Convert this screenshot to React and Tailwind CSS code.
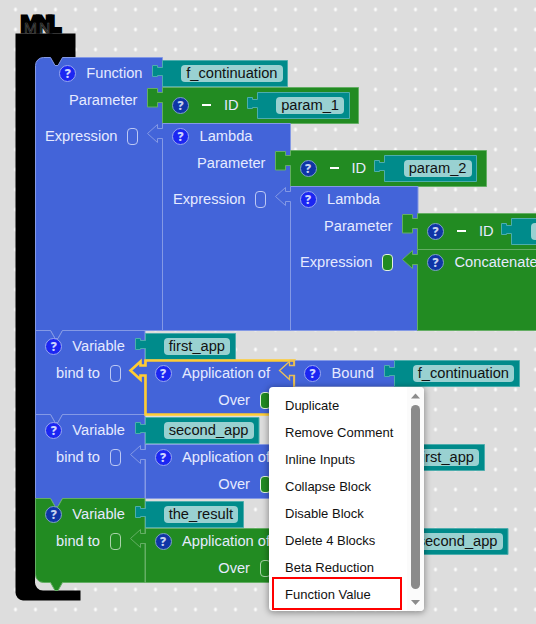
import React from "react";

const BLUE = "#4364d9";
const GREEN = "#228b22";
const TEAL = "#008b8b";
const EDGE = {
  [BLUE]: "#8499e5",
  [GREEN]: "#64ae64",
  [TEAL]: "#4dadad",
};

// Connector outlines, walked upward along a block's left edge from the bottom.
const TABS = {
  none: "",
  text: "V15 H-5 V16 H-10 V5 H-5 V7 H0",
  param: "V15 H-5 V19.5 H-15 V1 H-5 V5 H0",
  arrow: "V15 H-5 V19 L-15 10 L-5 1 V5 H0",
};

// A node of the workspace: its outline, and its inputs as rows.
function Node({ x, y, w, d, fill, stroke = EDGE[fill], sw = 1, children }) {
  return (
    <div className="absolute flex flex-col" style={{ left: x, top: y, width: w }}>
      <svg className="absolute top-0 left-0 overflow-visible" width="1" height="1">
        <path d={d} transform="translate(0.5 0.5)" fill={fill} stroke={stroke} strokeWidth={sw} />
      </svg>
      {children}
    </div>
  );
}

function Block({ w, h, tab = "none", ...rest }) {
  return <Node w={w} d={`M0 0 H${w} V${h} H0 ${TABS[tab]} Z`} {...rest} />;
}

function Statement({ w, h, first, last, ...rest }) {
  const top = first ? "M0 8 A8 8 0 0 1 8 0 H15" : "M0 0 H15";
  const bottom = last ? `H8 A8 8 0 0 1 0 ${h - 8}` : "H0";
  const d = `${top} L19.5 8 H22.5 L27 0 H${w} V${h} H27 L22.5 ${h + 8} H19.5 L15 ${h} ${bottom} Z`;
  return <Node x={35} w={w} d={d} {...rest} />;
}

function Row({ className, children }) {
  return (
    <div className={`relative flex items-center text-[14.67px] leading-5 whitespace-nowrap text-[#e6eaff] ${className}`}>
      {children}
    </div>
  );
}

function Help({ green }) {
  return (
    <span
      className={`relative top-[0.5px] left-[0.5px] flex size-[17px] shrink-0 items-center justify-center rounded-full border-[1.5px] font-['Open_Sans',sans-serif] text-[12px] leading-none font-extrabold ${
        green ? "border-[#7fa3c4] bg-[#0f35a6] text-[#c3d1f0]" : "border-[#98a7f0] bg-[#1b26f2] text-[#ccd3ff]"
      }`}
    >
      ?
    </span>
  );
}

const SLOTS = {
  blue: "border-[#bcc8f4]",
  filled: "border-[#e2f0e2] bg-[#228b22]",
  green: "border-[#a9d3a9]",
};

function Slot({ kind = "blue" }) {
  return <span className={`relative top-[0.5px] h-[17px] w-[11px] shrink-0 rounded-[4px] border-[1.3px] ${SLOTS[kind]}`} />;
}

function TextBlock({ x, y, w, tight, children }) {
  return (
    <Block x={x} y={y} w={w} h={26} tab="text" fill={TEAL}>
      <Row className={`h-[26px] justify-end ${tight ? "pr-[5px]" : "pr-[4.5px]"}`}>
        <span className="flex h-[17px] min-w-[66px] items-center justify-center rounded bg-[#99d1d1] px-[5px] text-[#111]">
          {children}
        </span>
      </Row>
    </Block>
  );
}

function IdBlock({ x, y }) {
  return (
    <Block x={x} y={y} w={196} h={36} tab="param" fill={GREEN}>
      <Row className="h-9 pl-[9.5px]">
        <Help green />
        <span className="mr-[13px] ml-[13.5px] h-[2px] w-[9px] bg-white" />
        ID
      </Row>
    </Block>
  );
}

function LambdaBlock({ x, y, w, h, slot }) {
  return (
    <Block x={x} y={y} w={w} h={h} tab="arrow" fill={BLUE}>
      <Row className="h-[26px] gap-[11px] pl-[9.5px]"><Help />Lambda</Row>
      <Row className="h-[28px] justify-end pr-[24.5px]">Parameter</Row>
      <Row className="h-[44px] justify-end gap-[9.5px] pr-[24px]">Expression<Slot kind={slot} /></Row>
    </Block>
  );
}

function VariableBlock({ y, fill, green, last }) {
  return (
    <Statement y={y} w={109.5} h={84} fill={fill} last={last}>
      <Row className="h-8 justify-end gap-[10.5px] pr-[19.5px]"><Help green={green} />Variable</Row>
      <Row className="h-[22px] justify-end gap-[9.5px] pr-[24px]">bind to<Slot kind={green ? "green" : "blue"} /></Row>
    </Statement>
  );
}

function ApplicationBlock({ y, fill, green, stroke, sw }) {
  return (
    <Block x={144.5} y={y} w={149} h={54} tab="arrow" fill={fill} stroke={stroke} sw={sw}>
      <Row className="h-[26px] justify-end gap-[11px] pr-[23.5px]"><Help green={green} />Application of</Row>
      <Row className="h-[28px] justify-end gap-[9.5px] pr-[23px]">Over<Slot kind={green ? "green" : "filled"} /></Row>
    </Block>
  );
}

function Backdrop() {
  return (
    <svg className="absolute inset-0" width="536" height="624">
      <defs>
        <pattern id="dots" x="5.5" y="-0.5" width="20" height="20" patternUnits="userSpaceOnUse">
          <path d="M8.5 10 H11.5 M10 8 V12" stroke="#fff" strokeWidth="1.3" />
        </pattern>
      </defs>
      <rect width="536" height="624" fill="#ddd" />
      <rect width="536" height="624" fill="url(#dots)" />
      <path d="M15.5 33.5 H75.5 V66 H35 V582 A8 8 0 0 0 43 590.5 H80.5 V600.5 H23 A8 8 0 0 1 15.5 592.5 Z" fill="#000" />
      <text
        x="21.5 36.5 48.5" y="31" fontSize="21" fontFamily="Liberation Sans, sans-serif"
        fill="#000" stroke="#000" strokeWidth="5" strokeMiterlimit="2"
      >
        MNL
      </text>
      <text
        x="24 39" y="33" fontSize="15.5" fontFamily="Liberation Sans, sans-serif"
        fill="#000" stroke="#555" strokeWidth="0.6"
      >
        MN
      </text>
    </svg>
  );
}

const menu = [
  "Duplicate", "Remove Comment", "Inline Inputs", "Collapse Block",
  "Disable Block", "Delete 4 Blocks", "Beta Reduction", "Function Value",
];

function ContextMenu() {
  return (
    <div className="absolute top-[387px] left-[269px] flex h-[224px] w-[155px] rounded bg-white shadow-[0_1px_6px_1px_rgba(0,0,0,0.35)]">
      <ul className="flex-1 pt-[5px]">
        {menu.map((m) => (
          <li key={m} className="relative h-[27px] pl-4 text-[13px] leading-[27px] whitespace-nowrap text-[#111]">
            {m}
            {m === "Function Value" && (
              <span className="absolute -top-[4px] left-[3px] h-[33px] w-[130px] border-2 border-[#f00]" />
            )}
          </li>
        ))}
      </ul>
      <div className="flex w-[17px] flex-col items-center rounded-r bg-[#fbfbfb]">
        <svg width="17" height="18"><path d="M4 11.5 L8.5 6.5 L13 11.5 Z" fill="#8b8b8b" /></svg>
        <div className="w-[9px] flex-1 rounded-full bg-[#8b8b8b]" />
        <svg width="17" height="22"><path d="M4 11 L8.5 16 L13 11 Z" fill="#8b8b8b" /></svg>
      </div>
    </div>
  );
}

export default function App() {
  return (
    <main className="relative h-[624px] w-[536px] overflow-hidden bg-[#ddd] font-['Liberation_Sans',Arial,sans-serif]">
      <Backdrop />

      <Statement y={57} w={127} h={273} fill={BLUE} first>
        <Row className="h-8 justify-end gap-[10.5px] pr-[19.5px]"><Help />Function</Row>
        <Row className="h-[22px] justify-end pr-[24.5px]">Parameter</Row>
        <Row className="h-[50px] justify-end gap-[9.5px] pr-[24px]">Expression<Slot /></Row>
      </Statement>
      <TextBlock x={162} y={60} w={125}>f_continuation</TextBlock>
      <IdBlock x={162} y={87} />
      <TextBlock x={257} y={92} w={92} tight>param_1</TextBlock>
      <LambdaBlock x={162} y={123} w={128} h={207} />
      <IdBlock x={289.5} y={150} />
      <TextBlock x={384} y={155} w={92}>param_2</TextBlock>
      <LambdaBlock x={289.5} y={186} w={127.5} h={144} slot="filled" />
      <IdBlock x={417} y={213} />
      <TextBlock x={511} y={218} w={90} />
      <Block x={417} y={249} w={196} h={81} tab="arrow" fill={GREEN}>
        <Row className="h-[26px] gap-[11px] pl-[9.5px]"><Help green />Concatenate</Row>
      </Block>

      <VariableBlock y={330} fill={BLUE} />
      <VariableBlock y={414} fill={BLUE} />
      <VariableBlock y={498} fill={GREEN} green last />

      <TextBlock x={144.5} y={333} w={90}>first_app</TextBlock>
      <TextBlock x={144.5} y={417} w={113.5}>second_app</TextBlock>
      <ApplicationBlock y={444} fill={BLUE} />
      <TextBlock x={393.5} y={444} w={90}>first_app</TextBlock>
      <TextBlock x={144.5} y={501} w={98}>the_result</TextBlock>
      <ApplicationBlock y={528} fill={GREEN} green />
      <TextBlock x={393.5} y={528} w={113.5}>second_app</TextBlock>

      <ApplicationBlock y={360} fill={BLUE} stroke="#fc3" sw={2.6} />
      <Block x={293.5} y={360} w={100} h={26} tab="arrow" fill={BLUE}>
        <Row className="h-[26px] gap-[11px] pl-[10px]"><Help />Bound</Row>
      </Block>
      <Node x={293.5} y={360} w={1} d="M0 26 V15 H-5 V19 L-15 10 L-5 1 V5 H0 V0 H-5" fill="none" stroke="#e6bd5a" sw={1.3} />
      <TextBlock x={393.5} y={360} w={125}>f_continuation</TextBlock>

      <ContextMenu />
    </main>
  );
}
